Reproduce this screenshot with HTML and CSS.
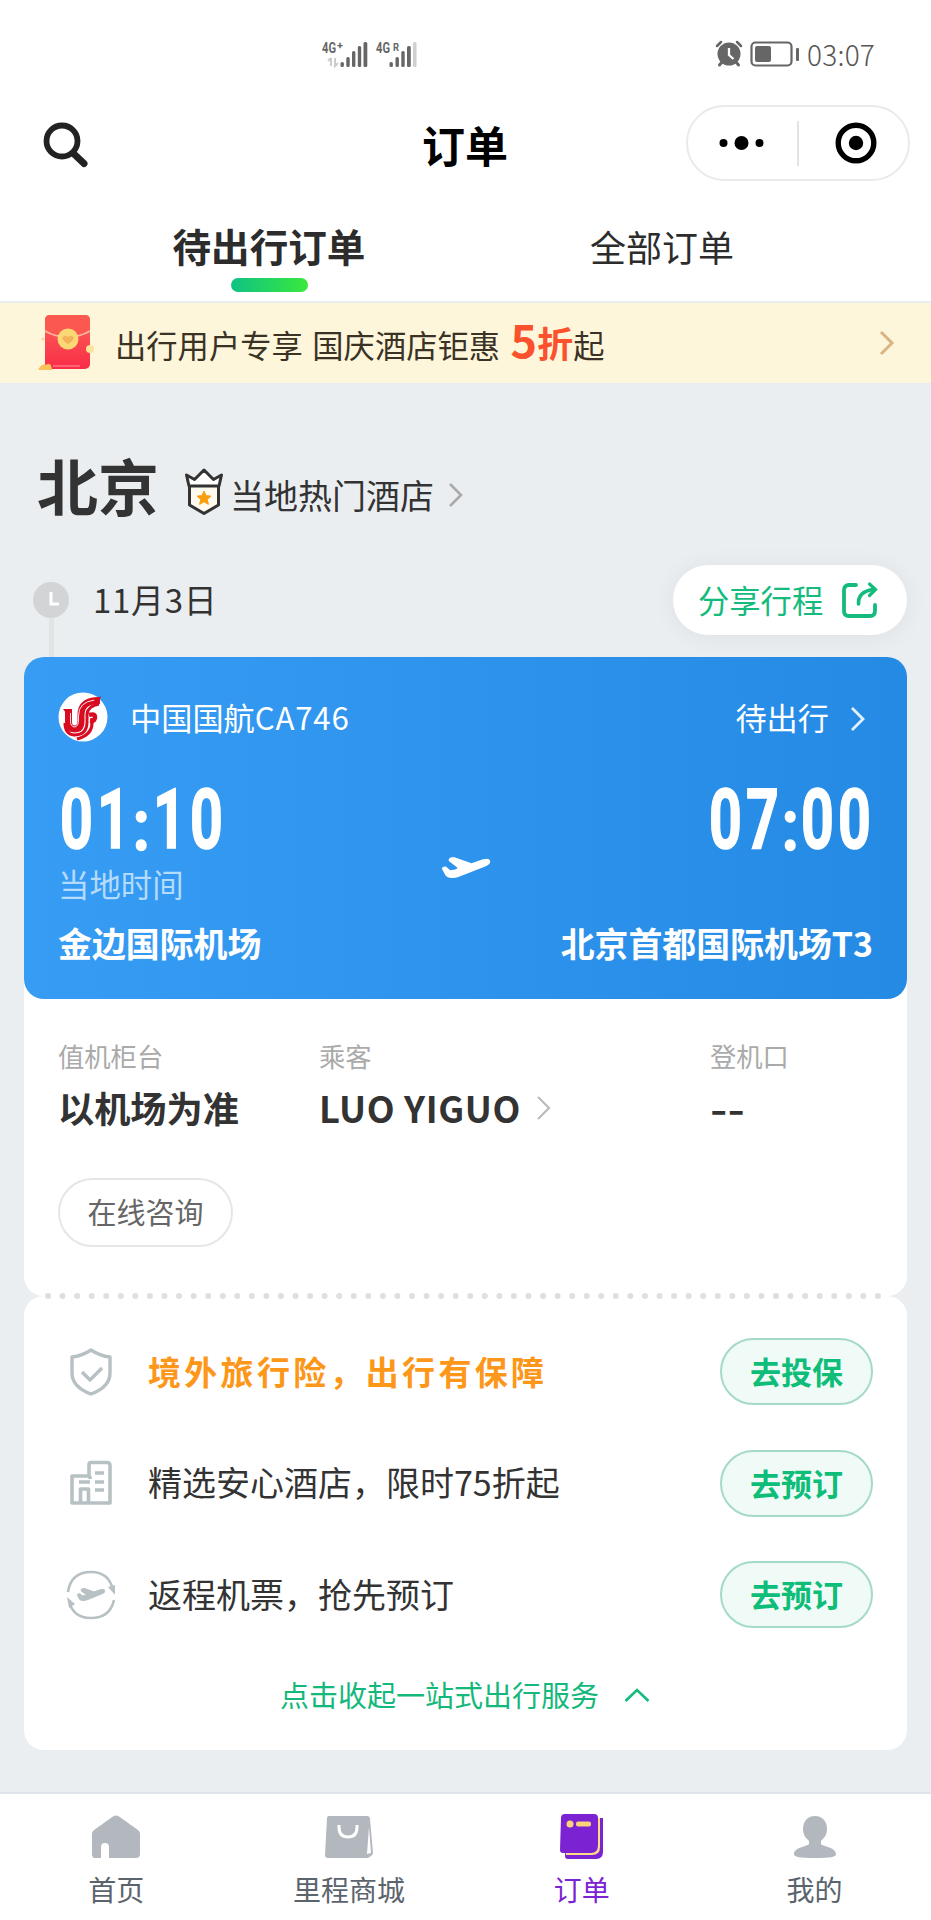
FILE: index.html
```html
<!DOCTYPE html>
<html lang="zh-CN">
<head>
<meta charset="utf-8">
<title>订单</title>
<link rel="stylesheet" href="styles.css">
</head>
<body>
<div class="page">
  <header class="top">
    <div class="status">
      <svg class="signals" width="96" height="30" viewBox="0 0 96 30">
        <g fill="#666">
          <text class="net" x="0" y="13" textLength="14" lengthAdjust="spacingAndGlyphs">4G</text><text class="net-sup" x="15" y="9">+</text>
          <rect x="18.500" y="22" width="3.400" height="5" rx="1.500"/><rect x="24.300" y="17" width="3.400" height="10" rx="1.500"/><rect x="30" y="11" width="3.400" height="16" rx="1.500"/><rect x="35.800" y="6" width="3.400" height="21" rx="1.500"/><rect x="41.500" y="2" width="3.800" height="25" rx="1.500"/>
          <text class="net" x="54" y="13" textLength="14" lengthAdjust="spacingAndGlyphs">4G</text><text class="net-sup" x="71" y="11" textLength="6" lengthAdjust="spacingAndGlyphs">R</text>
          <rect x="67.500" y="22" width="3.400" height="5" rx="1.500"/><rect x="73.500" y="17" width="3.400" height="10" rx="1.500"/><rect x="79.300" y="11" width="3.400" height="16" rx="1.500"/><rect x="85" y="6" width="3.800" height="21" rx="1.500"/>
        </g>
        <rect x="91" y="2" width="3.500" height="25" rx="1.500" fill="#d0d0d0"/>
        <path d="M9 18v8M6 21l3-3M13 18v8l3-3" fill="none" stroke="#ccc" stroke-width="2"/>
      </svg>
      <div class="status-right">
        <svg width="28" height="28" viewBox="0 0 28 28">
          <circle cx="14" cy="14" r="11.500" fill="#666"/>
          <path d="M7 22l-2.500 3M21 22l2.500 3" stroke="#666" stroke-width="3" stroke-linecap="round"/>
          <path d="M2 6l4-4M26 6l-4-4" stroke="#666" stroke-width="2.500" stroke-linecap="round"/>
          <path d="M14 8v7l4.500 4" fill="none" stroke="#fff" stroke-width="2.300"/>
        </svg>
        <svg width="50" height="28" viewBox="0 0 50 28">
          <rect x="1.500" y="2.500" width="40" height="23" rx="4" fill="none" stroke="#666" stroke-width="2.200"/>
          <rect x="5" y="6" width="16" height="16" rx="2" fill="#666"/><rect x="46" y="8" width="3" height="13" rx="1" fill="#666"/>
        </svg>
        <span class="clock">03:07</span>
      </div>
    </div>
    <div class="titlebar">
      <svg class="search" width="48" height="48" viewBox="0 0 48 48"><circle cx="20" cy="20" r="15.500" fill="none" stroke="#222" stroke-width="5.800"/><path d="M32 33l10 9.500" stroke="#222" stroke-width="7" stroke-linecap="round"/></svg>
      <h1 class="title">订单</h1>
      <div class="capsule">
        <svg width="45" height="20" viewBox="0 0 45 20"><circle cx="4.500" cy="10" r="4"/><circle cx="22.500" cy="10" r="7"/><circle cx="40.500" cy="10" r="4"/></svg>
        <i class="capsule-line"></i>
        <svg width="42" height="42" viewBox="0 0 42 42"><circle cx="21" cy="21" r="17.800" fill="none" stroke="#000" stroke-width="5.400"/><circle cx="21" cy="21" r="7.200"/></svg>
      </div>
    </div>
    <nav class="tabs">
      <a class="tab tab-on">待出行订单</a>
      <a class="tab">全部订单</a>
    </nav>
  </header>

  <div class="banner">
    <svg class="packet" width="58" height="60" viewBox="0 0 58 60">
      <defs><linearGradient id="red" x2="0" y2="1"><stop stop-color="#fb6457"/><stop offset="1" stop-color="#f92c48"/></linearGradient></defs>
      <rect x="8" y="3" width="45" height="54" rx="5" fill="url(#red)"/>
      <path d="M8 19V8q0-5 5-5h35q5 0 5 5v11q-10 6-22.500 6T8 19z" fill="#fb584f"/>
      <path d="M8 19q10 6 22.500 6T53 19" fill="none" stroke="#fcb3a0" stroke-width="2"/>
      <circle cx="31" cy="27" r="10.500" fill="#fbd874"/>
      <path d="M25 26q3-4 6-1 4-3 6 1-2 4-6 6-4-2-6-6z" fill="#f3b25c"/>
      <circle cx="53" cy="37" r="4" fill="#fce39b"/><circle cx="6" cy="27" r="1.500" fill="#fbd0a0"/>
      <path d="M1 58q4-7 8-5 5-4 6 5z" fill="#f9c35c"/><path d="M16 54h27" stroke="#ff7380" stroke-width="1.500"/>
    </svg>
    <p class="banner-text">出行用户专享 国庆酒店钜惠 <b class="five">5</b><b class="zhe">折</b>起</p>
    <svg class="banner-arrow" width="16" height="28" viewBox="0 0 16 28"><path d="M2 3l11 11L2 25" fill="none" stroke="#dbb482" stroke-width="3"/></svg>
  </div>

  <main class="content">
    <div class="city-row">
      <h2 class="city">北京</h2>
      <svg class="badge" width="40" height="50" viewBox="0 0 40 50">
        <path d="M5.500 18v20L20 46.500 34.500 38V18z" fill="#fffaf0" stroke="#333" stroke-width="3" stroke-linejoin="round"/>
        <path d="M2.500 8l8 4.500L20 3l9.500 9.500 8-4.500-2.500 11H5z" fill="#fff" stroke="#333" stroke-width="3" stroke-linejoin="round"/>
        <path d="M20 24l2 4.700 5 .4-3.800 3.300 1.200 5L20 34.700l-4.400 2.700 1.200-5-3.800-3.300 5-.4z" fill="#fb9e0c" stroke="#fb9e0c"/>
      </svg>
      <span class="hot">当地热门酒店</span>
      <svg class="hot-arrow" width="16" height="28" viewBox="0 0 16 28"><path d="M2 3l11 11L2 25" fill="none" stroke="#aaa" stroke-width="2.600"/></svg>
    </div>

    <div class="date-row">
      <div class="timeline">
        <svg class="time-dot" width="36" height="36" viewBox="0 0 36 36"><circle cx="18" cy="18" r="18" fill="#d3d4d5"/><path d="M18 10v12h8" fill="none" stroke="#fff" stroke-width="3"/></svg>
        <i class="time-line"></i>
      </div>
      <span class="date">11月3日</span>
      <a class="share">分享行程
        <svg width="38" height="38" viewBox="0 0 38 38"><path d="M15 4H8Q3 4 3 9v21q0 5 5 5h21q5 0 5-5v-6" fill="none" stroke="#14bb7c" stroke-width="3.800" stroke-linecap="round"/><path d="M17.500 23Q17 10 33 8.500" fill="none" stroke="#14bb7c" stroke-width="3.600" stroke-linecap="round"/><path d="M28.500 3L34.500 8.500l-6 6" fill="none" stroke="#14bb7c" stroke-width="3.200" stroke-linecap="round"/></svg>
      </a>
    </div>

    <section class="flight">
      <div class="flight-head">
        <svg class="airline" width="50" height="50" viewBox="0 0 50 50">
          <circle cx="25" cy="25" r="24.500" fill="#fff"/>
          <g fill="none" stroke="#d90b20">
            <path d="M10.500 19v11q0 7 6 7 6.500 0 6.500-8v-6Q23 8 42 8.500" stroke-width="7"/>
            <path d="M7 31q0 11 9 12 13 0 13-13v-8q1-8 12-10" stroke-width="3"/>
            <path d="M31 23q6-2 6 2.500-.5 4-5 3.500" stroke-width="4.500"/>
            <path d="M34 26v5q0 12-15 16" stroke-width="3.200"/>
            <path d="M12.500 20v9q0 6 4.500 6 3.500-1 3.500-7v-4q0-14 16-16" stroke="#fff" stroke-width=".9"/>
          </g>
          <path d="M5 17h9v4H8zM36 6q5 0 7-2-1 6-6 8z" fill="#d90b20"/>
        </svg>
        <span class="flight-no">中国国航<span class="latin">CA746</span></span>
        <span class="state">待出行</span>
        <svg class="state-arrow" width="16" height="28" viewBox="0 0 16 28"><path d="M2 3l11 11L2 25" fill="none" stroke="#e4f2ff" stroke-width="2.800"/></svg>
      </div>
      <div class="route">
        <div class="stop">
          <div class="time"><b>0</b><b>1</b><i>:</i><b>1</b><b>0</b></div>
          <div class="local">当地时间</div>
          <div class="airport">金边国际机场</div>
        </div>
        <svg class="plane" width="50" height="24" viewBox="0 0 50 24"><path d="M.8 12.500q1-2.600 4-2l4.500 3.700 5-.7 2.500-1.600-9-6.800Q7 2 10.500 1.200h3l17 6L42 3.300q6-1.500 7.200 1.500.6 3.500-5 5.600L18 20.800q-4 1.500-8 1.200-4 0-5.500-2.400z" fill="#fff"/></svg>
        <div class="stop stop-end">
          <div class="time"><b>0</b><b>7</b><i>:</i><b>0</b><b>0</b></div>
          <div class="local"></div>
          <div class="airport">北京首都国际机场T3</div>
        </div>
      </div>
    </section>

    <section class="details">
      <div class="facts">
        <div class="fact"><span class="label">值机柜台</span><span class="value">以机场为准</span></div>
        <div class="fact"><span class="label">乘客</span><span class="value passenger">LUO YIGUO
          <svg class="value-arrow" width="16" height="28" viewBox="0 0 16 28"><path d="M2 3l11 11L2 25" fill="none" stroke="#bbb" stroke-width="2.200"/></svg></span></div>
        <div class="fact"><span class="label">登机口</span><span class="value gate">--</span></div>
      </div>
      <a class="consult">在线咨询</a>
    </section>
    <svg class="perforation" width="883" height="6" viewBox="0 0 883 6"><path d="M24 3h832" fill="none" stroke="#dedfe0" stroke-width="6" stroke-linecap="round" stroke-dasharray="0 14.560"/></svg>

    <section class="services">
      <div class="service">
        <svg width="50" height="50" viewBox="0 0 50 50" fill="none" stroke="#b7c1c4" stroke-width="3.400" stroke-linejoin="round"><path d="M25 3q9 6 19 7v16q0 14-19 21Q6 40 6 26V10q10-1 19-7z"/><path d="M16 25l8 8 12-12"/></svg>
        <span class="service-name highlight">境外旅行险，出行有保障</span><a class="go">去投保</a>
      </div>
      <div class="service">
        <svg width="50" height="50" viewBox="0 0 50 50" fill="none" stroke="#b7c1c4" stroke-width="3.600" stroke-linejoin="round"><path d="M6 45V18h17V6.500q0-2 2-2h16q3 0 3 3V45zM14.500 45V31h8v14M24 18v3"/><path d="M29 15h9M29 24h9M29 32h9M13 24h11"/></svg>
        <span class="service-name">精选安心酒店，限时75折起</span><a class="go">去预订</a>
      </div>
      <div class="service">
        <svg width="50" height="50" viewBox="0 0 50 50" fill="none" stroke="#b7c1c4" stroke-width="2.600"><path d="M2 22Q5 2 25 2q18 0 22 18M48 30q-4 18-23 18Q7 48 3 31"/><path d="M42 17l7 8V15zM1 27l2 11 6-4z" fill="#b7c1c4" stroke="none"/><g transform="translate(11 18) scale(.56)"><path d="M.8 12.500q1-2.600 4-2l4.500 3.700 5-.7 2.500-1.600-9-6.800Q7 2 10.500 1.200h3l17 6L42 3.300q6-1.500 7.200 1.500.6 3.500-5 5.600L18 20.800q-4 1.500-8 1.200-4 0-5.500-2.400z" fill="#b7c1c4" stroke-width="2"/></g></svg>
        <span class="service-name">返程机票，抢先预订</span><a class="go">去预订</a>
      </div>
      <a class="collapse">点击收起一站式出行服务
        <svg width="26" height="16" viewBox="0 0 26 16"><path d="M1.500 14L13 3l11.500 11" fill="none" stroke="#14bb7c" stroke-width="2.600"/></svg>
      </a>
    </section>
  </main>

  <nav class="bottom">
    <a class="item"><svg width="50" height="46" viewBox="0 0 50 46"><path d="M22 2.500q3-2 6 0l19 13.500q2 1.500 2 4v20q0 4-4 4H18V33q0-4-4-4t-4 4v11H4q-3 0-3-4V20q0-2.500 2-4z" fill="#b3b8be"/></svg>首页</a>
    <a class="item"><svg width="50" height="46" viewBox="0 0 50 46"><path d="M5 2h38q3 0 3 3l3 34q0 2-2 3l-3 2H4q-3 0-3-3L3 4q0-2 2-2z" fill="#b3b8be"/><path d="M15 11v2q0 10 9 10t9-10v-2" fill="none" stroke="#fff" stroke-width="3"/><path d="M45 13l2 26-4 1z" fill="#fff"/></svg>里程商城</a>
    <a class="item item-on"><svg width="50" height="46" viewBox="0 0 50 46"><path d="M10 4h36v34q0 7-7 7H11q-3 0-3-3z" fill="#7b22d3"/><path d="M10 4h33v29q0 8-8 8H9z" fill="#fcdc86"/><path d="M8 0h29q4 0 4 4v27q0 8-7 8H6q-3 0-3-3L4 4q0-4 4-4z" fill="#7b22d3"/><circle cx="13" cy="10" r="3.500" fill="#fcd27a"/><rect x="19" y="7.500" width="15" height="5" rx="2" fill="#fcd27a"/></svg>订单</a>
    <a class="item"><svg width="50" height="46" viewBox="0 0 50 46"><path d="M25 2c8 0 12 6 12 13 0 6-3 9-6 12v3c0 2 15 3 15 10 0 3-5 4-21 4S4 43 4 40c0-7 15-8 15-10v-3c-3-3-6-6-6-12C13 8 17 2 25 2z" fill="#b3b8be"/></svg>我的</a>
  </nav>
</div>
</body>
</html>
```

FILE: styles.css
```css
* { box-sizing: border-box; margin: 0; padding: 0; }
body { width: 931px; font-family: "Noto Sans CJK SC", sans-serif; color: #333; background: #ebeef1; line-height: 1; }
svg { display: block; flex: none; }
.page { width: 931px; height: 1920px; display: flex; flex-direction: column; overflow: hidden; }

.top { height: 303px; background: #fff; border-bottom: 2px solid #eaedef; }
.status { height: 92px; padding: 40px 56px 0 322px; display: flex; justify-content: space-between; }
.net { font: 700 14px Roboto, sans-serif; }
.net-sup { font: 700 11px Roboto, sans-serif; }
.status-right { display: flex; height: 28px; gap: 7px; align-items: center; }
.clock { font-size: 28px; font-weight: 300; color: #555; letter-spacing: .2px; }
.titlebar { height: 102px; padding: 0 21px 0 42px; display: grid; grid-template-columns: 224px 1fr 224px; align-items: center; }
.title { font-size: 43px; font-weight: 700; color: #000; text-align: center; padding-right: 22px; line-height: 46px; margin-top: 1px; }
.search { margin-top: 4px; }
.capsule { height: 76px; border: 2px solid #eaeaea; border-radius: 38px; display: flex; align-items: center; padding: 0 31px; justify-content: space-between; }
.capsule-line { width: 2px; height: 45px; background: #e3e3e3; margin: 0 3px 0 0; }
.tabs { display: flex; height: 107px; padding: 0 73px; }
.tab { flex: 1; text-align: center; font-size: 36px; line-height: 105px; color: #2c2c2c; display: flex; flex-direction: column; align-items: center; }
.tab-on { font-size: 38.600px; font-weight: 700; line-height: 103px; padding-right: 1px; }
.tab-on::after { content: ""; width: 77px; height: 14px; border-radius: 7px; margin-top: -19px; background: linear-gradient(90deg, #10c284, #38e93c); }

.banner { height: 80px; background: #fdf6db; display: flex; align-items: center; padding: 0 36px 0 37px; }
.banner-text { flex: 1; margin-left: 20px; font-size: 31.300px; line-height: 84px; height: 80px; color: #3b3226; white-space: nowrap; word-spacing: 2.500px; }
.five, .zhe { color: #fb512d; font-weight: 700; }
.five { font-size: 45px; line-height: 44px; margin-left: 1px; }
.zhe { font-size: 36px; line-height: 44px; }
.packet { margin-top: -2px; }
.banner-arrow { margin-top: -1px; }

.content { flex: 1; padding: 0 24px; }
.city-row { height: 166px; padding: 50px 0 0 13px; display: flex; align-items: center; }
.city { font-size: 61px; font-weight: 700; line-height: 80px; margin-top: -13px; }
.badge { margin: 2px 6px 0 25px; }
.hot { font-size: 34px; line-height: 40px; margin: 7px 14px 0 0; }
.hot-arrow { margin-top: 8px; }
.date-row { height: 108px; display: flex; align-items: flex-start; padding-left: 9px; }
.timeline { width: 36px; height: 108px; padding-top: 33px; display: flex; flex-direction: column; align-items: center; }
.time-line { flex: 1; width: 5px; background: #e2e5e5; }
.date { font-size: 33px; letter-spacing: .7px; margin: 30px 0 0 24px; line-height: 40px; flex: 1; }
.share { width: 234px; height: 70px; margin-top: 16px; border-radius: 35px; background: #fff; box-shadow: 0 2px 24px rgba(0,0,0,.06); color: #14bb7c; font-size: 31.300px; line-height: 66px; display: flex; align-items: center; justify-content: space-between; padding: 0 28px 0 25px; }

.flight { height: 342px; border-radius: 20px; background: linear-gradient(90deg, #379cf4, #258ae4); color: #fff; padding: 35px 34px 0; position: relative; z-index: 1; }
.flight-head { height: 50px; display: flex; align-items: center; }
.flight-no { font-size: 31.200px; margin-left: 22px; flex: 1; line-height: 46px; }
.latin { letter-spacing: .8px; }
.state { font-size: 31.200px; margin-right: 21px; line-height: 46px; }
.state-arrow { margin: 4px 7px 0 0; }
.route { display: flex; justify-content: space-between; align-items: flex-start; }
.stop { display: flex; flex-direction: column; flex: 1; }
.stop-end { align-items: flex-end; }
.time { display: flex; height: 66px; margin-top: 45px; font-family: Roboto, sans-serif; font-size: 83px; line-height: 66px; -webkit-text-stroke: 1.500px #fff; }
.time b, .time i { width: 37px; display: flex; justify-content: center; font-weight: 700; font-style: normal; transform: scaleX(.69); }
.time i { width: 18.500px; transform: translateY(5px) scale(.75, .88); }
.local { font-size: 31.400px; height: 36px; line-height: 36px; color: #b4dbfb; margin-top: 13px; }
.airport { font-size: 33.900px; font-weight: 700; line-height: 40px; margin-top: 21px; white-space: nowrap; }
.plane { margin: 114px 0 0; }

.details { height: 317px; margin-top: -20px; background: #fff; border-radius: 0 0 20px 20px; padding: 58px 34px 0; }
.facts { display: grid; grid-template-columns: 261px 391px 1fr; height: 141px; }
.fact { display: flex; flex-direction: column; }
.label { font-size: 26.300px; line-height: 38px; color: #aaa; }
.value { font-size: 36.200px; font-weight: 700; line-height: 48px; margin-top: 8px; display: flex; align-items: center; }
.passenger { letter-spacing: .6px; }
.value-arrow { margin: 2px 0 0 15px; }
.gate { width: 33px; transform: scaleX(1.3); transform-origin: 0 50%; }
.consult { width: 175px; height: 69px; border: 2px solid #e6e6e6; border-radius: 35px; color: #666; font-size: 29px; line-height: 63px; display: flex; justify-content: center; }
.perforation { height: 6px; margin: -3px 0; position: relative; }
.services { height: 454px; background: #fff; border-radius: 20px; padding: 20px 34px 0 42px; }
.service { height: 111.500px; display: flex; align-items: center; }
.service-name { flex: 1; margin-left: 32px; font-size: 34px; line-height: 50px; margin-top: -2px; }
.highlight { color: #fd9719; font-weight: 700; font-size: 33px; letter-spacing: 3.300px; }
.go { width: 153px; height: 67px; border: 2px solid #a5dac6; border-radius: 34px; background: #f0fbf8; color: #0dbd78; font-weight: 700; font-size: 31px; line-height: 61px; text-align: center; }
.collapse { display: flex; height: 88px; align-items: center; justify-content: center; gap: 25px; color: #14b87a; font-size: 29px; padding-right: 9px; }

.bottom { height: 128px; background: #fff; border-top: 2px solid #dfe4ea; display: grid; grid-template-columns: repeat(4, 1fr); }
.item { display: flex; flex-direction: column; align-items: center; padding-top: 20px; font-size: 28px; line-height: 40px; color: #5b646c; gap: 9px; }
.item-on { color: #7b22d3; }
```
